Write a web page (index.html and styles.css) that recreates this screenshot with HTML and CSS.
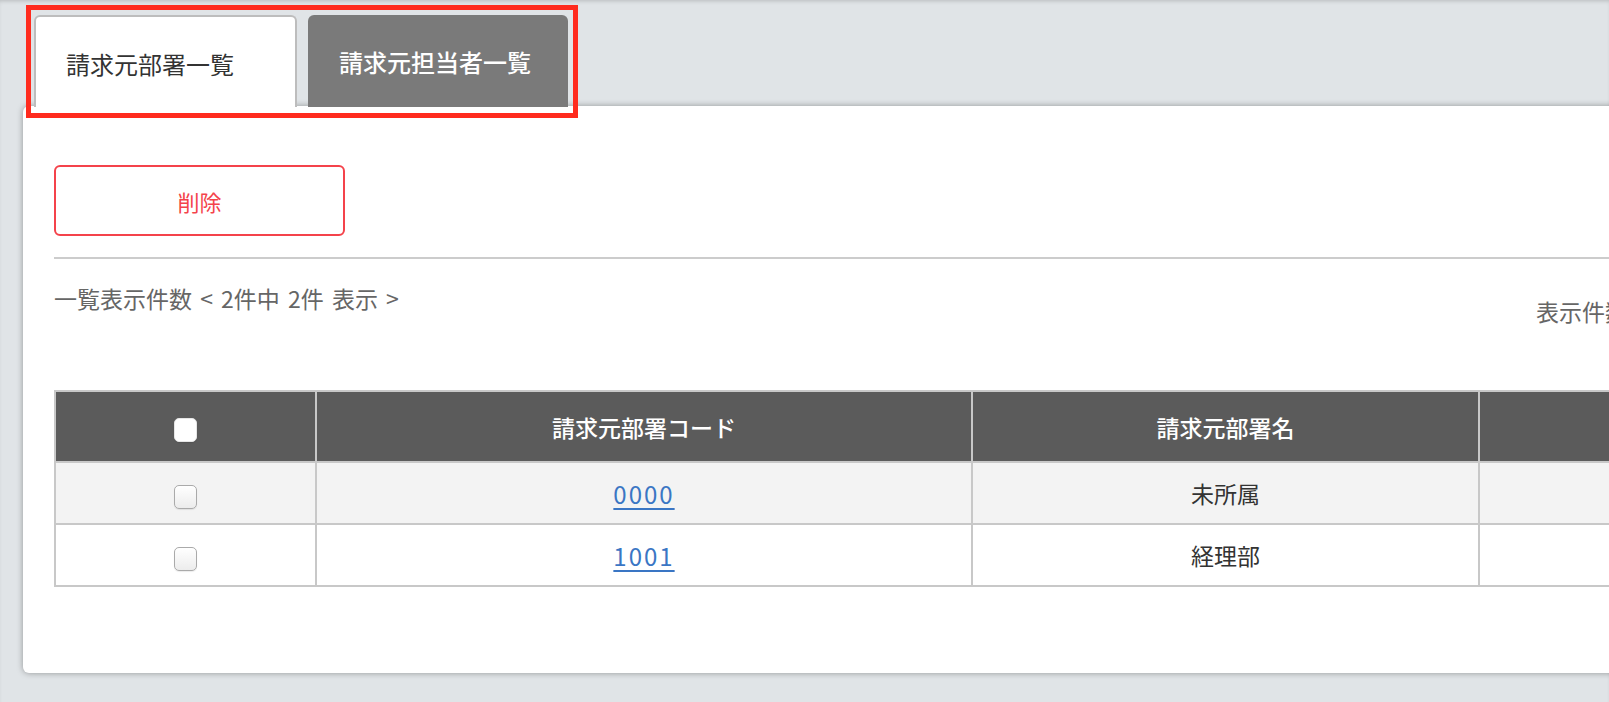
FILE: index.html
```html
<!DOCTYPE html>
<html lang="ja">
<head>
<meta charset="utf-8">
<title>請求元部署一覧</title>
<link rel="stylesheet" href="styles.css">
</head>
<body>
<div class="page">
  <div class="tabs">
    <div class="tab tab-active">請求元部署一覧</div>
    <div class="tab tab-inactive">請求元担当者一覧</div>
  </div>
  <div class="panel">
    <div class="toolbar">
      <button class="btn-delete" type="button">削除</button>
    </div>
    <div class="divider"></div>
    <div class="summary-row">
      <div class="summary">一覧表示件数 &lt; 2件中 2件 表示 &gt;</div>
      <div class="per-page">表示件数</div>
    </div>
    <table class="list">
      <colgroup>
        <col class="c1"><col class="c2"><col class="c3"><col class="c4">
      </colgroup>
      <thead>
        <tr>
          <th><input type="checkbox" class="cb cb-head"></th>
          <th>請求元部署コード</th>
          <th>請求元部署名</th>
          <th></th>
        </tr>
      </thead>
      <tbody>
        <tr class="odd">
          <td><input type="checkbox" class="cb"></td>
          <td><a href="#" class="code-link">0000</a></td>
          <td>未所属</td>
          <td></td>
        </tr>
        <tr>
          <td><input type="checkbox" class="cb"></td>
          <td><a href="#" class="code-link">1001</a></td>
          <td>経理部</td>
          <td></td>
        </tr>
      </tbody>
    </table>
  </div>
  <div class="highlight"></div>
</div>
</body>
</html>
```

FILE: styles.css
```css
html, body {
  margin: 0;
  padding: 0;
  overflow: hidden;
}
body {
  width: 1609px;
  height: 702px;
  background: #e0e4e7;
  font-family: "Noto Sans CJK JP", "Noto Sans", sans-serif;
  color: #333;
  box-shadow: inset 0 3px 4px -2px rgba(0, 0, 0, 0.18);
}
.page {
  position: relative;
  padding-top: 15px;
}
.tabs {
  display: flex;
  gap: 11px;
  margin-left: 34px;
  position: relative;
  z-index: 2;
}
.tab {
  box-sizing: border-box;
  height: 92px;
  display: flex;
  align-items: center;
  padding-left: 32px;
  font-size: 24px;
  border-radius: 6px 6px 0 0;
}
.tab-active {
  width: 263px;
  background: #fff;
  border: 2px solid #bdbdbd;
  border-bottom: none;
  padding-left: 30px;
  padding-top: 2px;
  color: #333;
}
.tab-inactive {
  width: 260px;
  background: #7a7a7a;
  color: #fff;
  font-weight: 500;
  padding-left: 31px;
}
.panel {
  position: relative;
  z-index: 1;
  box-sizing: border-box;
  width: 1636px;
  margin-left: 23px;
  margin-top: -1px;
  padding: 59px 31px 86px 31px;
  background: #fff;
  border-radius: 6px;
  box-shadow: 0 0 6px rgba(0, 0, 0, 0.35);
}
.toolbar {
  display: flex;
}
.btn-delete {
  box-sizing: border-box;
  width: 291px;
  height: 71px;
  background: #fff;
  border: 2px solid #f4434b;
  border-radius: 6px;
  color: #f4434b;
  font-family: inherit;
  font-size: 22px;
  padding: 0;
}
.divider {
  height: 2px;
  background: #cccccc;
  margin-top: 21px;
}
.summary-row {
  display: flex;
  justify-content: space-between;
  align-items: flex-start;
  margin-top: 23px;
  font-size: 23px;
  line-height: 33px;
  color: #666;
}
.summary {
  word-spacing: 3px;
}
.per-page {
  margin-top: 13px;
}
.list {
  width: 100%;
  margin-top: 62px;
  border-collapse: collapse;
  border: 2px solid #c8c8c8;
  table-layout: fixed;
}
.c1 { width: 261px; }
.c2 { width: 656px; }
.c3 { width: 507px; }
.list th,
.list td {
  border: 2px solid #c8c8c8;
  text-align: center;
  padding: 0;
  font-size: 23px;
}
.list th {
  height: 69px;
  background: #5b5b5b;
  color: #fff;
  font-weight: 500;
}
.list td {
  height: 60px;
  color: #333;
}
.list tr.odd td {
  background: #f3f3f3;
}
.code-link {
  color: #3a76c4;
  font-size: 24px;
  letter-spacing: 2px;
  text-decoration: underline;
  text-decoration-thickness: 2px;
  text-underline-offset: 4px;
}
.cb {
  appearance: none;
  -webkit-appearance: none;
  box-sizing: border-box;
  width: 23px;
  height: 24px;
  margin: 0;
  vertical-align: middle;
  border: 1px solid #aaa;
  border-radius: 5px;
  background: linear-gradient(#ffffff, #ececec);
  box-shadow: 0 1px 1px rgba(0, 0, 0, 0.08);
}
.cb-head {
  border: 1px solid #e6e6e6;
  background: #fff;
}
.highlight {
  position: absolute;
  left: 26px;
  top: 5px;
  width: 552px;
  height: 113px;
  box-sizing: border-box;
  border: 5px solid #ff2b1e;
  z-index: 3;
  pointer-events: none;
}
```
